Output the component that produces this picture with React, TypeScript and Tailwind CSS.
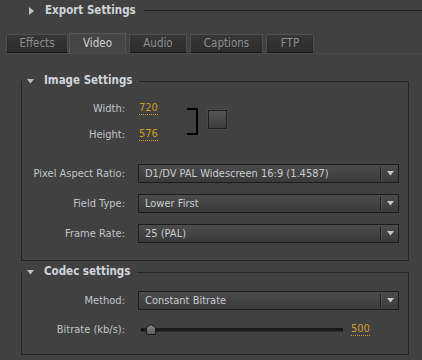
import React from "react";

function DownTri({ c = "#c4c4c4" }: { c?: string }) {
  return (
    <svg width="7" height="5" viewBox="0 0 7 5" className="block">
      <path d="M0 0 H7 L3.5 4.5 Z" fill={c} />
    </svg>
  );
}

function Dropdown({ text }: { text: string }) {
  return (
    <div className="ml-[13px] w-[261px] h-[19px] border border-[#1c1c1c] bg-gradient-to-b from-[#4c4c4c] to-[#3a3a3a] flex items-center">
      <span className="flex-1 pl-[6px] text-[#c6ccd2] whitespace-nowrap leading-none">{text}</span>
      <div className="w-px h-[13px] bg-[#1e1e1e]" />
      <div className="w-px h-[13px] bg-[#555555]" />
      <div className="w-[16px] flex justify-center">
        <DownTri c="#c8c8c8" />
      </div>
    </div>
  );
}

function Label({ children }: { children: React.ReactNode }) {
  return <div className="w-[103px] text-right text-[#bfc5cb] whitespace-nowrap leading-none">{children}</div>;
}

function Value({ children }: { children: React.ReactNode }) {
  return (
    <span className="text-[#d39c22] border-b border-dotted border-[#d39c22] leading-[12px]">{children}</span>
  );
}

function GroupHeader({ title }: { title: string }) {
  return (
    <div className="-mt-[7px] h-[14px] flex items-center">
      <div className="ml-[5px]">
        <DownTri c="#bdbdbd" />
      </div>
      <span className="ml-[10px] font-bold text-[11.5px] text-[#cfd5db] whitespace-nowrap leading-none">{title}</span>
      <div className="ml-[7px] flex-1 self-start mt-[7px] h-px bg-[#242424]" />
    </div>
  );
}

function Tab({ label, active, w }: { label: string; active?: boolean; w: string }) {
  if (active) {
    return (
      <div className={`${w} h-[20px] border-x border-t border-[#575757] bg-[#454545] flex items-center justify-center text-[#d0d5da] text-[11.5px]`}>
        {label}
      </div>
    );
  }
  return (
    <div className={`${w} h-[19px] border-x border-t border-[#4f4f4f] border-b border-b-[#151515] bg-gradient-to-b from-[#363636] to-[#2c2c2c] flex items-center justify-center text-[#8d8f92] text-[11.5px]`}>
      {label}
    </div>
  );
}

export default function App() {
  return (
    <div className="w-[422px] h-[360px] bg-[#414141] overflow-hidden font-['DejaVu_Sans_Condensed','DejaVu_Sans',sans-serif] text-[11px] flex flex-col">
      {/* Export Settings header */}
      <div className="h-[21px] flex items-center">
        <svg width="5" height="8" viewBox="0 0 5 8" className="ml-[29px] block">
          <path d="M0 0 L5 4 L0 8 Z" fill="#c4c4c4" />
        </svg>
        <span className="ml-[11px] font-bold text-[11.5px] text-[#cfd5db] whitespace-nowrap leading-none">Export Settings</span>
        <div className="ml-[8px] flex-1 h-px bg-[#1f1f1f]" />
      </div>

      {/* Tabs */}
      <div className="mt-[12px] h-[20px] flex items-end pl-[6px] gap-[1px]">
        <Tab label="Effects" w="w-[62px]" />
        <Tab label="Video" active w="w-[57px]" />
        <div className="w-px" />
        <Tab label="Audio" w="w-[58px]" />
        <div className="w-px" />
        <Tab label="Captions" w="w-[73px]" />
        <div className="w-px" />
        <Tab label="FTP" w="w-[48px]" />
      </div>
      <div className="ml-[4px] h-px bg-[#4b4b4b]" />

      {/* Image Settings */}
      <div className="ml-[21px] w-[388px] mt-[27px] border-x border-b border-[#242424] flex flex-col">
        <GroupHeader title="Image Settings" />
        <div className="mt-[7px] flex items-start">
          <div className="flex flex-col w-[165px]">
            <div className="h-[26px] flex items-center">
              <Label>Width:</Label>
              <div className="ml-[14px]">
                <Value>720</Value>
              </div>
            </div>
            <div className="h-[26px] flex items-center">
              <Label>Height:</Label>
              <div className="ml-[14px]">
                <Value>576</Value>
              </div>
            </div>
          </div>
          <div className="mt-[13px] w-[11px] h-[27px] border-y-2 border-r-2 border-black" />
          <div className="ml-[10px] mt-[15px] w-[19px] h-[19px] border border-[#1f1f1f] bg-gradient-to-b from-[#555555] to-[#3d3d3d] shadow-[0_0_0_1px_#4a4a4a]" />
        </div>
        <div className="mt-[17px] flex items-center">
          <Label>Pixel Aspect Ratio:</Label>
          <Dropdown text="D1/DV PAL Widescreen 16:9 (1.4587)" />
        </div>
        <div className="mt-[11px] flex items-center">
          <Label>Field Type:</Label>
          <Dropdown text="Lower First" />
        </div>
        <div className="mt-[11px] mb-[17px] flex items-center">
          <Label>Frame Rate:</Label>
          <Dropdown text="25 (PAL)" />
        </div>
      </div>

      {/* Codec settings */}
      <div className="ml-[21px] w-[388px] mt-[11px] border-x border-b border-[#242424] flex flex-col">
        <GroupHeader title="Codec settings" />
        <div className="mt-[12px] flex items-center">
          <Label>Method:</Label>
          <Dropdown text="Constant Bitrate" />
        </div>
        <div className="mt-[10px] mb-[15px] h-[19px] flex items-center">
          <Label>Bitrate (kb/s):</Label>
          <svg width="202" height="12" viewBox="0 0 202 12" className="ml-[16px] block">
            <rect x="0" y="4" width="202" height="4" fill="#1b1b1b" />
            <rect x="1" y="7" width="200" height="1" fill="#2e2e2e" />
            <rect x="0" y="5" width="2" height="2" fill="#0e0e0e" />
            <rect x="200" y="5" width="2" height="2" fill="#0e0e0e" />
            <defs>
              <linearGradient id="th" x1="0" y1="0" x2="0" y2="1">
                <stop offset="0" stopColor="#8a8a8a" />
                <stop offset="1" stopColor="#5a5a5a" />
              </linearGradient>
            </defs>
            <path d="M5.5 10.5 V3.5 L10 0.5 L14.5 3.5 V10.5 Z" fill="url(#th)" stroke="#1a1a1a" strokeWidth="1" />
          </svg>
          <div className="ml-[8px]">
            <Value>500</Value>
          </div>
        </div>
      </div>
    </div>
  );
}
